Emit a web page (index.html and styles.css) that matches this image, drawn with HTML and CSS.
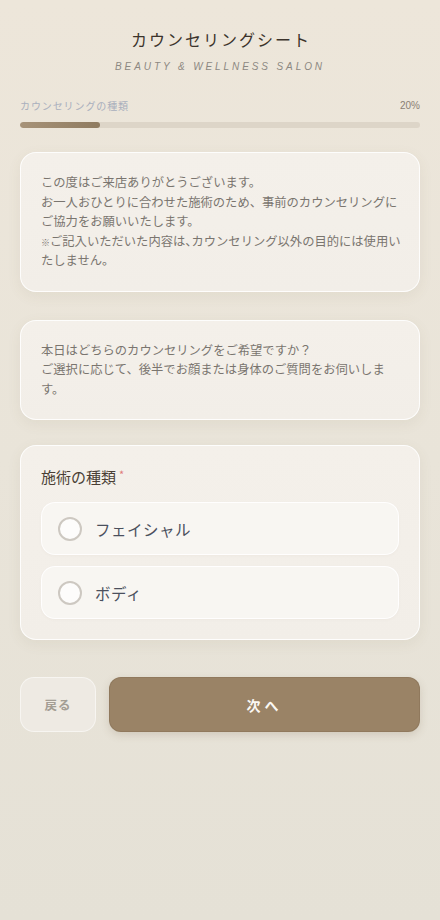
FILE: index.html
```html
<!DOCTYPE html>
<html lang="ja">
<head>
<meta charset="utf-8">
<title>カウンセリングシート</title>
<link rel="stylesheet" href="styles.css">
</head>
<body>
<main class="page">
  <header class="header">
    <h1 class="title">カウンセリングシート</h1>
    <p class="subtitle">BEAUTY &amp; WELLNESS SALON</p>
  </header>

  <section class="progress">
    <div class="progress-head">
      <span class="progress-label">カウンセリングの種類</span>
      <span class="progress-value">20%</span>
    </div>
    <div class="progress-track"><div class="progress-fill" style="width:20%"></div></div>
  </section>

  <section class="card note">
    <p>この度はご来店ありがとうございます。<br>お一人おひとりに合わせた施術のため、事前のカウンセリングにご協力をお願いいたします。<br><span class="mark">※</span>ご記入いただいた内容は<span class="half">、</span>カウンセリング以外の目的には使用いたしません。</p>
  </section>

  <section class="card note">
    <p>本日はどちらのカウンセリングをご希望ですか？<br>ご選択に応じて、後半でお顔または身体のご質問をお伺いします。</p>
  </section>

  <section class="card question">
    <h2 class="q-title">施術の種類<span class="req">*</span></h2>
    <div class="options">
      <label class="option"><span class="radio"></span><span class="opt-text">フェイシャル</span></label>
      <label class="option"><span class="radio"></span><span class="opt-text">ボディ</span></label>
    </div>
  </section>

  <nav class="actions">
    <button class="btn back">戻る</button>
    <button class="btn next">次へ</button>
  </nav>
</main>
</body>
</html>
```

FILE: styles.css
```css
* { box-sizing: border-box; }
html, body { margin: 0; padding: 0; }
body {
  min-height: 920px;
  background: linear-gradient(180deg, #ede6da 0%, #e9e4d9 50%, #e5e1d6 100%);
  font-family: "Noto Sans CJK JP", "Noto Sans", sans-serif;
  color: #6f6a64;
}
.page {
  padding: 27px 20px 40px;
  display: flex;
  flex-direction: column;
}
.header { text-align: center; }
.title {
  margin: 0;
  font-size: 16px;
  line-height: 24px;
  font-weight: 400;
  letter-spacing: 2px;
  color: #3b332b;
  padding-left: 2px;
}
.subtitle {
  margin: 9px 0 0;
  font-family: "Liberation Sans", Arial, sans-serif;
  font-style: italic;
  font-size: 10px;
  line-height: 14px;
  letter-spacing: 2.9px;
  color: #8c8882;
}
.progress { margin-top: 24px; }
.progress-head {
  display: flex;
  justify-content: space-between;
  align-items: center;
  height: 14px;
}
.progress-label {
  font-size: 10px;
  letter-spacing: 0.9px;
  color: #a9afbd;
}
.progress-value {
  font-family: "Liberation Sans", Arial, sans-serif;
  font-size: 10px;
  color: #8a8074;
}
.progress-track {
  margin-top: 10px;
  height: 6px;
  border-radius: 3px;
  background: #ddd5c8;
  overflow: hidden;
}
.progress-fill {
  height: 100%;
  border-radius: 3px;
  background: linear-gradient(90deg, #a79379, #8f7b60);
}
.card {
  margin-top: 24px;
  background: linear-gradient(180deg, #f4f0ea, #f2eee8);
  border: 1px solid rgba(255,255,255,0.85);
  border-radius: 16px;
  box-shadow: 0 4px 14px rgba(120, 100, 70, 0.08);
  padding: 20px;
}
.card.note { padding-right: 16px; }
.card + .card { margin-top: 28px; }
.card.question { margin-top: 25px; }
.note p {
  margin: 0;
  font-size: 12.3px;
  line-height: 19.5px;
  color: #7a756f;
}
.mark {
  font-size: 9px;
  line-height: 1;
  letter-spacing: 0;
}
.half {
  font-feature-settings: "halt";
}
.q-title {
  margin: 0;
  font-size: 15px;
  line-height: 22px;
  font-weight: 400;
  color: #4a3f35;
}
.req {
  color: #e07a7a;
  font-size: 11px;
  vertical-align: top;
  margin-left: 3px;
  line-height: 16px;
}
.options {
  margin-top: 14px;
  display: flex;
  flex-direction: column;
  gap: 11px;
}
.option {
  display: flex;
  align-items: center;
  height: 53px;
  padding: 0 16px;
  border-radius: 14px;
  background: #f8f6f2;
  border: 1px solid rgba(255,255,255,0.9);
  box-shadow: 0 1px 3px rgba(120,100,70,0.04);
}
.radio {
  width: 24px;
  height: 24px;
  border-radius: 50%;
  border: 2px solid #cdc8c1;
  background: #fdfcfb;
  flex: none;
}
.opt-text {
  margin-left: 13px;
  font-size: 15.5px;
  color: #4b505d;
  letter-spacing: 0.5px;
}
.actions {
  margin-top: 37px;
  display: flex;
  gap: 13px;
}
.btn {
  font-family: "Noto Sans CJK JP", "Noto Sans", sans-serif;
  border: none;
  height: 55px;
  font-weight: 700;
  cursor: pointer;
}
.back {
  width: 76px;
  border-radius: 14px;
  background: #eeeae3;
  border: 1px solid rgba(255,255,255,0.5);
  color: #a39d94;
  font-size: 12.5px;
  letter-spacing: 1px;
}
.next {
  flex: 1;
  border-radius: 12px;
  background: #9a8366;
  color: #fbf8f3;
  font-size: 14px;
  letter-spacing: 4px;
  box-shadow: 0 3px 8px rgba(110, 90, 60, 0.18), inset 0 0 0 1px rgba(90,70,45,0.15);
}
```
